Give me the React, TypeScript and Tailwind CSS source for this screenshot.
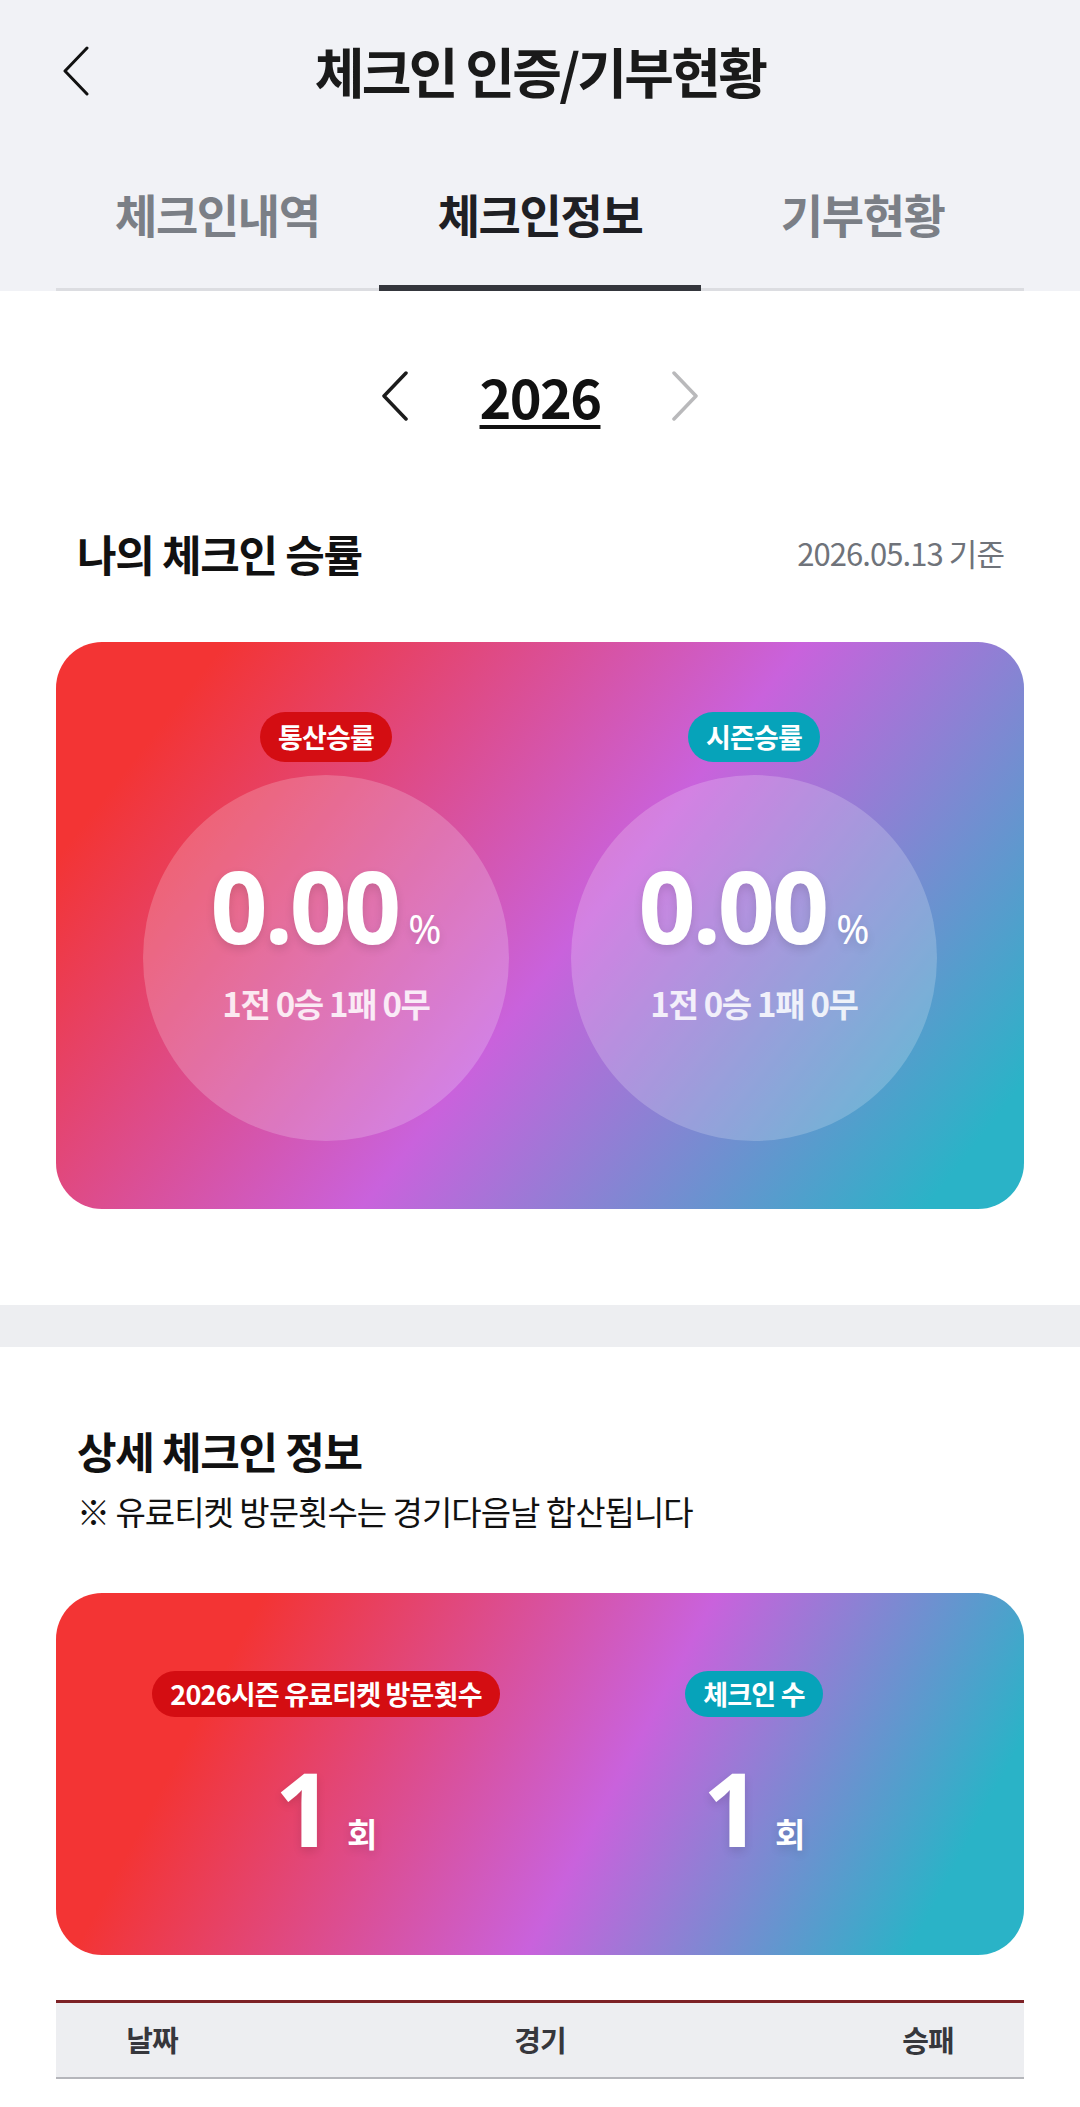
import React from "react";

const tabs = [
    { label: "체크인내역", active: false },
    { label: "체크인정보", active: true },
    { label: "기부현황", active: false },
];

const rates = [
    { badge: "통산승률", badgeColor: "bg-[#d40d12]", value: "0.00", record: "1전 0승 1패 0무" },
    { badge: "시즌승률", badgeColor: "bg-[#06a3ba]", value: "0.00", record: "1전 0승 1패 0무" },
];

const visits = [
    { badge: "2026시즌 유료티켓 방문횟수", badgeColor: "bg-[#d40d12]", count: 1 },
    { badge: "체크인 수", badgeColor: "bg-[#06a3ba]", count: 1 },
];

// simple thin chevron, left or right
const Chevron = ({ dir, color, width = 3 }: { dir: "left" | "right"; color: string; width?: number }) => (
    <svg width="30" height="50" viewBox="0 0 30 50" fill="none">
        <polyline
            points={dir === "left" ? "26,2 4,25 26,48" : "4,2 26,25 4,48"}
            stroke={color}
            strokeWidth={width}
            strokeLinecap="round"
            strokeLinejoin="round"
        />
    </svg>
);

const Badge = ({ text, color, h }: { text: string; color: string; h: string }) => (
    <div className={`${color} ${h} rounded-full px-[18px] flex items-center justify-center text-white text-[27px] font-bold tracking-[-0.03em]`}>
        {text}
    </div>
);

export default function App() {
    return (
        <div className="w-[1080px] min-h-[2107px] bg-white font-['Noto_Sans_CJK_KR','Noto_Sans',sans-serif] text-[#111]">
            {/* Header */}
            <div className="bg-[#f1f2f6]">
                <div className="h-[142px] grid grid-cols-[1fr_auto_1fr] items-center">
                    <div className="pl-[61px] flex items-center">
                        <Chevron dir="left" color="#111" />
                    </div>
                    <h1 className="text-[54px] font-bold tracking-[-0.05em] text-[#1a1a1a] leading-none">
                        체크인 인증/기부현황
                    </h1>
                    <div />
                </div>

                <div className="mx-[56px] flex border-b-[3px] border-[#dcdde1]">
                    {tabs.map((tab) => (
                        <div key={tab.label} className="flex-1 h-[149px] -mb-[3px] flex flex-col">
                            <div
                                className={`flex-1 flex items-center justify-center text-[46px] font-bold tracking-[-0.03em] ${tab.active ? "text-[#1f2024]" : "text-[#7b7f86]"}`}
                            >
                                {tab.label}
                            </div>
                            <div className={`h-[6px] ${tab.active ? "bg-[#34363c]" : "bg-transparent"}`} />
                        </div>
                    ))}
                </div>
            </div>

            {/* Year selector */}
            <div className="h-[210px] flex items-center justify-center gap-[70px]">
                <Chevron dir="left" color="#1c1c1c" width={3.5} />
                <span className="text-[54px] font-bold leading-none underline decoration-[4px] underline-offset-[6px] tracking-[-0.03em]">
                    2026
                </span>
                <Chevron dir="right" color="#b9b9bb" width={3.5} />
            </div>

            {/* My check-in rate */}
            <div className="mt-[26px] h-[52px] pl-[77px] pr-[76px] flex items-center justify-between">
                <h2 className="text-[43px] font-bold tracking-[-0.03em] leading-none">나의 체크인 승률</h2>
                <span className="text-[31px] text-[#6f737a] tracking-[-0.03em]">2026.05.13 기준</span>
            </div>

            <div className="mx-[56px] mt-[63px] h-[567px] rounded-[46px] bg-[linear-gradient(128deg,#f33434_12%,#c962dc_53%,#2ab3c7_93%)] px-[56px] pt-[70px] grid grid-cols-2">
                {rates.map((r) => (
                    <div key={r.badge} className="flex flex-col items-center">
                        <Badge text={r.badge} color={r.badgeColor} h="h-[50px]" />
                        <div className="mt-[13px] w-[366px] h-[366px] rounded-full bg-white/20 flex flex-col items-center pt-[78px]">
                            <div className="flex items-baseline text-white h-[104px] [text-shadow:0_4px_10px_rgba(0,0,0,0.12)]">
                                <span className="font-['Noto_Sans',sans-serif] font-bold text-[100px] leading-[104px] tracking-[-0.03em]">
                                    {r.value}
                                </span>
                                <span className="ml-[10px] font-['Noto_Sans',sans-serif] text-[40px] leading-none">%</span>
                            </div>
                            <div className="mt-[26px] text-[33px] font-bold text-white/85 tracking-[-0.04em] leading-[40px]">
                                {r.record}
                            </div>
                        </div>
                    </div>
                ))}
            </div>

            {/* divider band */}
            <div className="mt-[96px] h-[42px] bg-[#edeef1]" />

            {/* Detail info */}
            <div className="mt-[77px] px-[77px]">
                <h2 className="h-[52px] flex items-center text-[43px] font-bold tracking-[-0.03em] leading-none">상세 체크인 정보</h2>
                <p className="mt-[16px] h-[40px] flex items-center text-[33px] tracking-[-0.03em] text-[#111]">
                    ※ 유료티켓 방문횟수는 경기다음날 합산됩니다
                </p>
            </div>

            <div className="mx-[56px] mt-[61px] h-[362px] rounded-[46px] bg-[linear-gradient(118deg,#f33434_18%,#c962dc_57%,#2ab3c7_90%)] px-[56px] pt-[78px] grid grid-cols-2">
                {visits.map((v) => (
                    <div key={v.badge} className="flex flex-col items-center">
                        <Badge text={v.badge} color={v.badgeColor} h="h-[46px]" />
                        <div className="mt-[36px] flex items-baseline text-white [text-shadow:0_4px_10px_rgba(0,0,0,0.12)]">
                            <span className="font-['Noto_Sans',sans-serif] font-bold text-[102px] leading-[110px]">{v.count}</span>
                            <span className="ml-[14px] text-[33px] font-bold leading-none">회</span>
                        </div>
                    </div>
                ))}
            </div>

            {/* table header */}
            <div className="mx-[56px] mt-[45px] border-t-[3px] border-[#7d2226] border-b-[2px] border-b-[#b5b6bb] bg-[#edeef1] h-[79px] grid grid-cols-[192px_1fr_192px] items-center text-[29px] font-bold text-[#36373c] tracking-[-0.03em]">
                <div className="text-center">날짜</div>
                <div className="text-center">경기</div>
                <div className="text-center">승패</div>
            </div>
        </div>
    );
}
